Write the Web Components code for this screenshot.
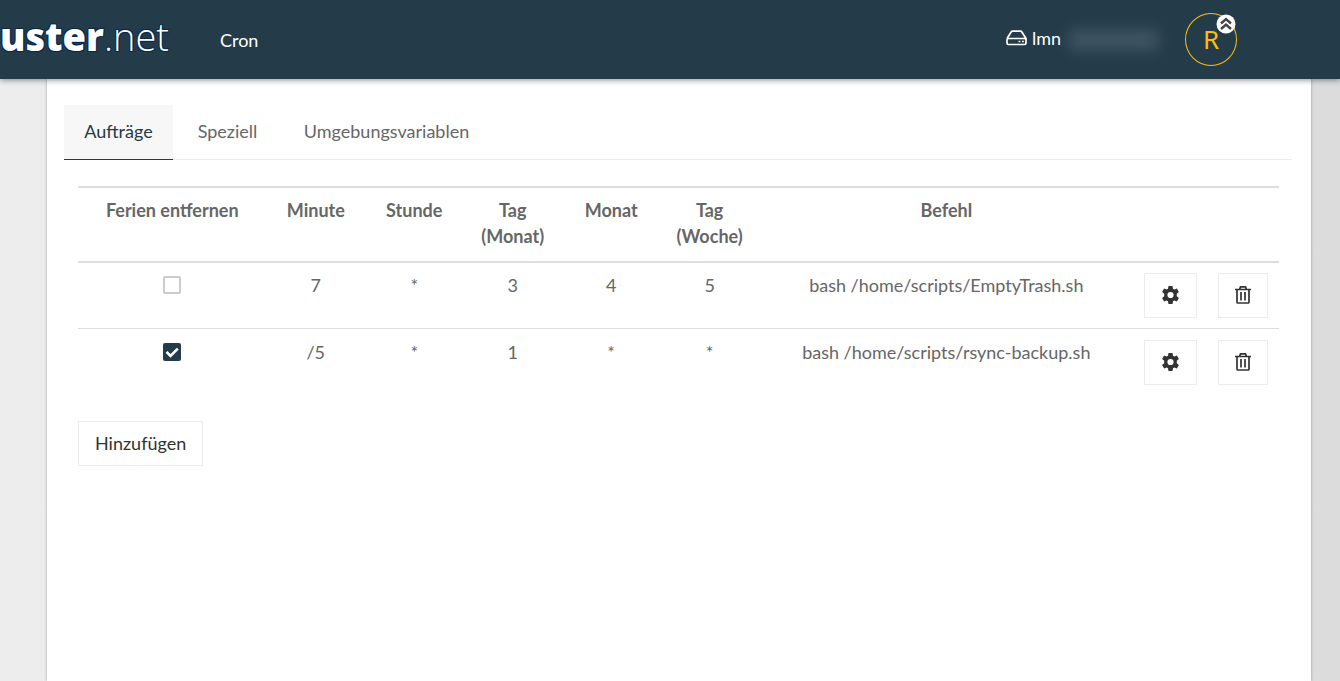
<!DOCTYPE html>
<html lang="de">
<head>
<meta charset="utf-8">
<title>Cron</title>
<style>
html { height: 100%; }
body {
  margin: 0; min-height: 100%; display: flex; flex-direction: column;
  background: linear-gradient(90deg, #ededed, #dcdcdc);
  font: 18px/26px Lato, "Noto Sans", sans-serif; color: #666;
}
body > app-panel { flex: 1; }
app-header b { font-weight: 800; }
</style>
</head>
<body>
<app-header>
  <span slot="brand"><b>uster</b>.net</span>
  <span slot="title">Cron</span>
  <span slot="host">lmn</span>
  <user-avatar slot="user">R</user-avatar>
</app-header>
<app-panel>
  <tab-bar>
    <tab-item active>Aufträge</tab-item>
    <tab-item>Speziell</tab-item>
    <tab-item wide>Umgebungsvariablen</tab-item>
  </tab-bar>
  <cron-jobs></cron-jobs>
</app-panel>
<script>
function define(name, html, setup) {
  const template = document.createElement('template');
  template.innerHTML = html;
  customElements.define(name, class extends HTMLElement {
    constructor() {
      super();
      this.attachShadow({ mode: 'open' }).append(template.content.cloneNode(true));
    }
    connectedCallback() { if (setup) setup(this, this.shadowRoot); }
  });
}

define('app-header', `
<style>
:host { display: flex; align-items: center; position: relative; height: 79px; background: #243b4a; color: #fff; box-shadow: 0 1px 6px rgba(0,0,0,.45); box-sizing: border-box; padding-right: 103px; }
.brand { width: 220px; height: 79px; line-height: 70px; }
::slotted([slot=brand]) { font: 300 38px/72px "Open Sans", sans-serif; color: #fff; text-shadow: 1px 1px #06294f, -1px -1px #06294f, 1px -1px #06294f, -1px 1px #06294f; }
.title { flex: 1; }
.host { display: flex; align-items: center; gap: 5px; color: #fff; text-decoration: none; padding-bottom: 4px; }
.mask { width: 90px; height: 22px; margin: 0 26px 0 8px; background: #445968; filter: blur(7px); opacity: .8; }
</style>
<div class="brand"><slot name="brand"></slot></div>
<div class="title"><slot name="title"></slot></div>
<a class="host" href="#"><svg width="21" height="18" viewBox="0 0 21 18" fill="none" stroke="#fff" stroke-width="1.7" stroke-linejoin="round"><path d="M1 9.500 5 3.200Q5.500 2.200 6.500 2.200H14.500Q15.500 2.200 16 3.200L20 9.500V14Q20 15.500 18.500 15.500H2.500Q1 15.500 1 14V11Q1 9.500 2.500 9.500H18.500Q20 9.500 20 11"/><path d="M12.500 12.500h1.800M16 12.500h1.800"/></svg><slot name="host"></slot></a>
<div class="mask"></div>
<slot name="user"></slot>
`);

define('user-avatar', `
<style>
:host { display: block; position: relative; }
button { width: 52px; height: 53px; box-sizing: border-box; border: 1px solid #fbbf0a; border-radius: 50%; background: none; color: #fbbf0a; font: 26px/48px "Noto Sans", sans-serif; padding: 0 0 2px; display: block; }
svg { position: absolute; right: 1px; top: 1px; }
</style>
<button><slot></slot></button>
<svg width="20" height="20" viewBox="0 0 20 20"><circle cx="10" cy="10" r="9.500" fill="#fff"/><path d="M5 9.500 10 5l5 4.500M5 15l5-4.500L15 15" fill="none" stroke="#444" stroke-width="2.400"/></svg>
`);

define('app-panel', `
<style>
:host { display: block; margin: 0 29px 0 47px; padding: 26px 19px 26px 17px; background: #fff; box-shadow: 0 0 3px rgba(0,0,0,.3); }
</style>
<slot></slot>
`);

define('tab-bar', `
<style>
:host { display: flex; border-bottom: 1px solid #ebebeb; }
</style>
<slot></slot>
`);

define('tab-item', `
<style>
:host { display: block; min-width: 109px; margin-bottom: -1px; }
:host([wide]) { min-width: 209px; }
a { display: block; padding: 13px 0 15px; text-align: center; color: #666; text-decoration: none; border-bottom: 1px solid transparent; }
:host([active]) a { background: #f7f7f7; color: #243b4a; border-color: #243b4a; }
</style>
<a href="#"><slot></slot></a>
`);

define('plain-button', `
<style>
:host { display: inline-block; vertical-align: top; }
button { display: block; box-sizing: border-box; height: 45px; min-width: 50px; padding: 0 16px 2px; border: 1px solid #ebebeb; background: #fff; color: #333; font: inherit; }
:host([kind=edit]) button { min-width: 53px; }
slot { display: block; }
::slotted(svg) { display: block; }
</style>
<button type="button"><slot></slot></button>
`, (host, root) => {
  const label = host.getAttribute('label');
  if (label) root.querySelector('button').setAttribute('aria-label', label);
});

define('check-box', `
<style>
:host { display: flex; justify-content: center; align-items: center; height: 26px; }
input { appearance: none; margin: 0; width: 18px; height: 18px; box-sizing: border-box; border: 2px solid #ccc; border-radius: 2px; background: #fff; display: grid; }
input:checked { border: 0; background: #243b4a; }
label { display: grid; }
input, svg { grid-area: 1 / 1; }
svg { visibility: hidden; pointer-events: none; }
input:checked + svg { visibility: visible; }
</style>
<label><input type="checkbox" aria-label="Ferien entfernen"><svg width="18" height="18" viewBox="0 0 18 18"><path d="m3.500 9 4 4 7.300-7.300" fill="none" stroke="#fff" stroke-width="2.600"/></svg></label>
`, (host, root) => { root.querySelector('input').checked = host.hasAttribute('checked'); });

const gear = '<svg width="19" height="18" viewBox="0 0 18 18" fill="#333"><path fill-rule="evenodd" d="M7 0h4l.500 2.700 1.300.800 2.600-.900 2 3.400-2.100 1.800v2.400l2.100 1.800-2 3.400-2.600-.900-1.300.800L11 18H7l-.500-2.700-1.300-.800-2.600.900-2-3.400 2.100-1.800V7.800L.600 6l2-3.400 2.600.900 1.300-.800zM9 5.900a3.100 3.100 0 1 0 0 6.200 3.100 3.100 0 0 0 0-6.200z"/></svg>';
const trash = '<svg width="16" height="18" viewBox="0 0 16 18" fill="none" stroke="#333" stroke-width="1.700"><path d="M0 3.500h16M4.500 3.500 5.500.900h5l1 2.600M2 3.500V16Q2 17 3 17h10Q14 17 14 16V3.500M6 6v8.500M10 6v8.500"/></svg>';
const columns = ['Ferien entfernen', 'Minute', 'Stunde', 'Tag (Monat)', 'Monat', 'Tag (Woche)', 'Befehl', '', ''];
const jobs = [
  { skip: false, fields: ['7', '*', '3', '4', '5', 'bash /home/scripts/EmptyTrash.sh'] },
  { skip: true, fields: ['/5', '*', '1', '*', '*', 'bash /home/scripts/rsync-backup.sh'] }
];

define('cron-jobs', `
<style>
:host { display: block; padding: 26px 13px 0 14px; }
table { width: 100%; table-layout: fixed; border-spacing: 0; border-top: 2px solid #ddd; }
.skip { width: 15.7%; } .time { width: 8.2%; } .edit { width: 6.2%; } .remove { width: 5.9%; }
th, td { padding: 9px 10px 10px; text-align: center; vertical-align: top; }
thead th, thead td { border-bottom: 2px solid #ddd; padding-bottom: 12px; }
tr + tr td { border-top: 1px solid #ddd; padding-top: 10px; }
tbody td:nth-last-child(-n+2) { text-align: left; padding-top: 10px; }
tr + tr td:nth-last-child(-n+2) { padding-top: 11px; }
.add { margin-top: 26px; }
</style>
<table>
<colgroup><col class="skip"><col class="time" span="5"><col><col class="edit"><col class="remove"></colgroup>
<thead><tr>${columns.map(c => c ? `<th scope="col">${c}</th>` : '<td></td>').join('')}</tr></thead>
<tbody>${jobs.map(j => `<tr><td><check-box ${j.skip ? 'checked' : ''}></check-box></td>${j.fields.map(f => `<td>${f}</td>`).join('')}<td><plain-button kind="edit" label="Bearbeiten">${gear}</plain-button></td><td><plain-button label="Löschen">${trash}</plain-button></td></tr>`).join('')}</tbody>
</table>
<plain-button class="add">Hinzufügen</plain-button>
`);
</script>
</body>
</html>
